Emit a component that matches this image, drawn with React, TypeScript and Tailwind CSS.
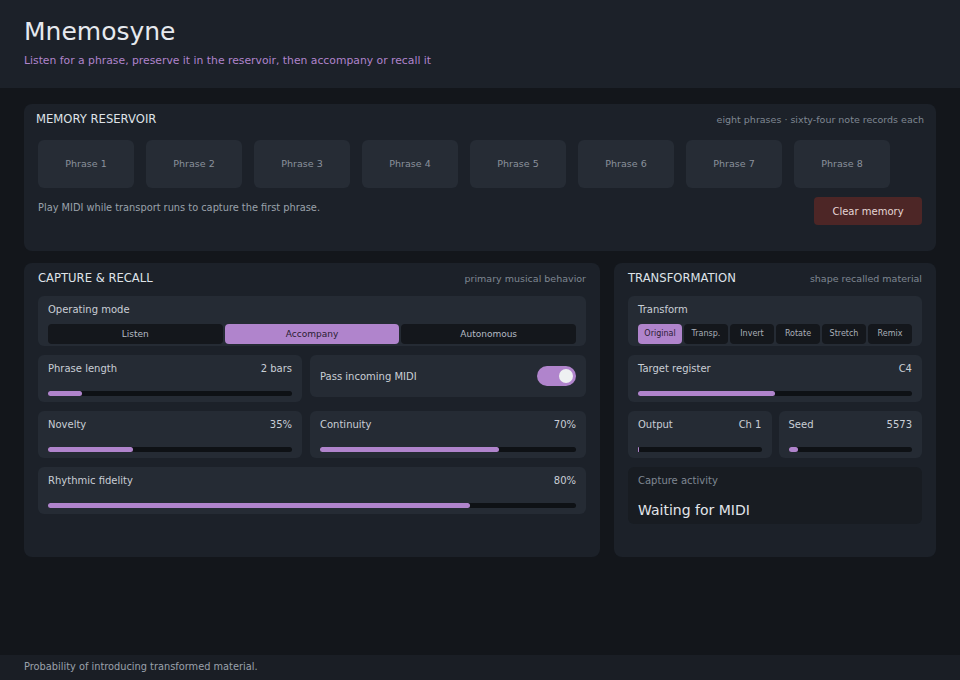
const font = { fontFamily: '"DejaVu Sans", Verdana, sans-serif' };

function Slider({ label, value, pct, className = '' }: { label: string; value: string; pct: number; className?: string }) {
  return (
    <div className={`h-[47px] rounded-md bg-[#252b34] px-[10px] pt-[6px] ${className}`}>
      <div className="flex justify-between text-[10px] text-[#c9ced6]">
        <span>{label}</span>
        <span>{value}</span>
      </div>
      <div className="mt-[15px] h-[5px] rounded-full bg-[#0e1115]">
        <div className="h-full rounded-full bg-[#b084cc]" style={{ width: `${pct}%` }} />
      </div>
    </div>
  );
}

export default function App() {
  const phrases = [1, 2, 3, 4, 5, 6, 7, 8];
  const transforms = ['Original', 'Transp.', 'Invert', 'Rotate', 'Stretch', 'Remix'];
  return (
    <div style={font} className="flex h-[680px] w-[960px] flex-col bg-[#13161b]">
      <header className="h-[88px] bg-[#1c2129] px-6 pt-[16px]">
        <h1 className="text-[25px] leading-[32px] text-[#e6e9ee]">Mnemosyne</h1>
        <p className="mt-[5px] text-[10.8px] text-[#b084cc]">Listen for a phrase, preserve it in the reservoir, then accompany or recall it</p>
      </header>

      <main className="flex flex-1 flex-col gap-[12px] px-6 pt-4">
        <section className="h-[147px] rounded-lg bg-[#1c2129] px-3 pt-[7px]">
          <div className="flex items-center justify-between">
            <h2 className="text-[11.6px] text-[#dfe3e8]">MEMORY RESERVOIR</h2>
            <span className="text-[9.5px] text-[#7f8792]">eight phrases · sixty-four note records each</span>
          </div>
          <div className="mt-[12px] flex gap-3 px-[2px]">
            {phrases.map((n) => (
              <div key={n} className="flex h-[48px] w-[96px] items-center justify-center rounded-md bg-[#262c35] text-[9.5px] text-[#8a919c]">
                Phrase {n}
              </div>
            ))}
          </div>
          <div className="mt-[9px] flex items-start justify-between px-[2px]">
            <p className="pt-[4px] text-[9.8px] text-[#9aa1ab]">Play MIDI while transport runs to capture the first phrase.</p>
            <button className="h-[28px] w-[108px] rounded bg-[#4d2626] text-[10px] text-[#e6d6d6]">Clear memory</button>
          </div>
        </section>

        <div className="flex h-[294px] gap-[14px]">
          <section className="flex w-[576px] flex-col gap-[9px] rounded-lg bg-[#1c2129] px-[14px] pt-[7px]">
            <div className="flex items-center justify-between">
              <h2 className="text-[11.6px] text-[#dfe3e8]">CAPTURE &amp; RECALL</h2>
              <span className="text-[9.5px] text-[#7f8792]">primary musical behavior</span>
            </div>
            <div className="h-[50px] rounded-md bg-[#252b34] px-[10px] pt-[6px]">
              <div className="text-[10px] text-[#c9ced6]">Operating mode</div>
              <div className="mt-[7px] flex gap-[2px]">
                {['Listen', 'Accompany', 'Autonomous'].map((m) => (
                  <div key={m} className={`flex h-[20px] flex-1 items-center justify-center rounded-sm text-[9px] ${m === 'Accompany' ? 'bg-[#b084cc] text-[#2a1d33]' : 'bg-[#14171c] text-[#b5bbc4]'}`}>{m}</div>
                ))}
              </div>
            </div>
            <div className="flex gap-2">
              <Slider label="Phrase length" value="2 bars" pct={14} className="w-[264px]" />
              <div className="flex h-[42px] flex-1 items-center justify-between rounded-md bg-[#252b34] px-[10px]">
                <span className="text-[10px] text-[#c9ced6]">Pass incoming MIDI</span>
                <div className="flex h-[20px] w-[39px] items-center justify-end rounded-full bg-[#b084cc] pr-[3px]">
                  <div className="h-[14px] w-[14px] rounded-full bg-[#eef0f2]" />
                </div>
              </div>
            </div>
            <div className="flex gap-2">
              <Slider label="Novelty" value="35%" pct={35} className="w-[264px]" />
              <Slider label="Continuity" value="70%" pct={70} className="flex-1" />
            </div>
            <Slider label="Rhythmic fidelity" value="80%" pct={80} />
          </section>

          <section className="flex flex-1 flex-col gap-[9px] rounded-lg bg-[#1c2129] px-[14px] pt-[7px]">
            <div className="flex items-center justify-between">
              <h2 className="text-[11.6px] text-[#dfe3e8]">TRANSFORMATION</h2>
              <span className="text-[9.5px] text-[#7f8792]">shape recalled material</span>
            </div>
            <div className="h-[50px] rounded-md bg-[#252b34] px-[10px] pt-[6px]">
              <div className="text-[10px] text-[#c9ced6]">Transform</div>
              <div className="mt-[7px] flex gap-[2px]">
                {transforms.map((t) => (
                  <div key={t} className={`flex h-[20px] flex-1 items-center justify-center rounded text-[8px] ${t === 'Original' ? 'bg-[#b084cc] text-[#2a1d33]' : 'bg-[#14171c] text-[#a9afb8]'}`}>{t}</div>
                ))}
              </div>
            </div>
            <Slider label="Target register" value="C4" pct={50} />
            <div className="flex gap-[7px]">
              <Slider label="Output" value="Ch 1" pct={1} className="flex-1" />
              <Slider label="Seed" value="5573" pct={8} className="flex-1" />
            </div>
            <div className="h-[57px] rounded-md bg-[#181c22] px-[10px] pt-[6px]">
              <div className="text-[10px] text-[#7f8792]">Capture activity</div>
              <div className="mt-[12px] text-[14px] text-[#e2e5ea]">Waiting for MIDI</div>
            </div>
          </section>
        </div>
      </main>

      <footer className="flex h-[25px] items-center bg-[#1a1e25] px-6 text-[9.8px] text-[#9aa1ab]">
        Probability of introducing transformed material.
      </footer>
    </div>
  );
}
